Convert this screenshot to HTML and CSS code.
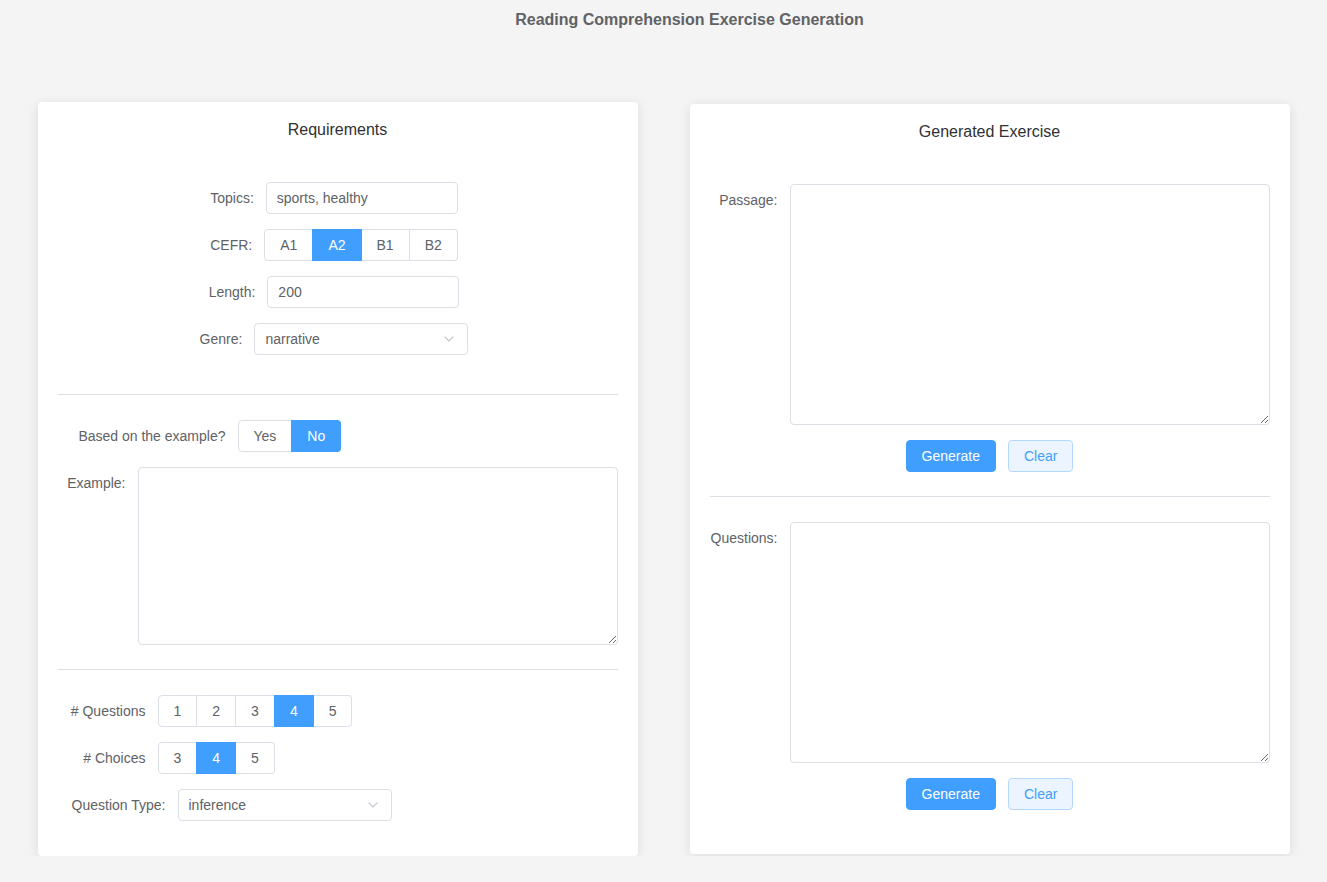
FILE: index.html
```html
<!DOCTYPE html>
<html lang="en">
<head>
<meta charset="utf-8">
<title>Reading Comprehension Exercise Generation</title>
<link rel="stylesheet" href="styles.css">
</head>
<body>
<h1 class="page-title">Reading Comprehension Exercise Generation</h1>
<main class="panels">
  <section class="card card-left">
    <h2 class="card-title">Requirements</h2>

    <div class="row-center">
      <div class="item">
        <label class="lbl">Topics:</label>
        <input class="input w192" type="text" value="sports, healthy">
      </div>
    </div>
    <div class="row-center">
      <div class="item">
        <label class="lbl">CEFR:</label>
        <div class="radio-group">
          <span class="rb">A1</span><span class="rb active">A2</span><span class="rb">B1</span><span class="rb">B2</span>
        </div>
      </div>
    </div>
    <div class="row-center">
      <div class="item">
        <label class="lbl">Length:</label>
        <input class="input w192" type="text" value="200">
      </div>
    </div>
    <div class="row-center">
      <div class="item">
        <label class="lbl">Genre:</label>
        <div class="select w214">
          <span class="select-text">narrative</span>
          <svg class="chev" width="10" height="6" viewBox="0 0 10 6"><path d="M0.6 0.6 L5 5 L9.4 0.6" fill="none" stroke="#c0c4cc" stroke-width="1.1"/></svg>
        </div>
      </div>
    </div>

    <hr class="divider">

    <div class="row">
      <label class="lbl fixed lw180">Based on the example?</label>
      <div class="radio-group">
        <span class="rb">Yes</span><span class="rb active">No</span>
      </div>
    </div>
    <div class="row top flush">
      <label class="lbl fixed lw80">Example:</label>
      <textarea class="textarea h178"></textarea>
    </div>

    <hr class="divider">

    <div class="row">
      <label class="lbl fixed lw100"># Questions</label>
      <div class="radio-group">
        <span class="rb">1</span><span class="rb">2</span><span class="rb">3</span><span class="rb active">4</span><span class="rb">5</span>
      </div>
    </div>
    <div class="row">
      <label class="lbl fixed lw100"># Choices</label>
      <div class="radio-group">
        <span class="rb">3</span><span class="rb active">4</span><span class="rb">5</span>
      </div>
    </div>
    <div class="row">
      <label class="lbl fixed lw120">Question Type:</label>
      <div class="select w214">
        <span class="select-text">inference</span>
        <svg class="chev" width="10" height="6" viewBox="0 0 10 6"><path d="M0.6 0.6 L5 5 L9.4 0.6" fill="none" stroke="#c0c4cc" stroke-width="1.1"/></svg>
      </div>
    </div>
  </section>

  <section class="card card-right">
    <h2 class="card-title">Generated Exercise</h2>

    <div class="row top">
      <label class="lbl fixed lw80">Passage:</label>
      <textarea class="textarea h241"></textarea>
    </div>
    <div class="btn-row">
      <button class="btn primary">Generate</button>
      <button class="btn plain">Clear</button>
    </div>

    <hr class="divider">

    <div class="row top">
      <label class="lbl fixed lw80">Questions:</label>
      <textarea class="textarea h241"></textarea>
    </div>
    <div class="btn-row end">
      <button class="btn primary">Generate</button>
      <button class="btn plain">Clear</button>
    </div>
  </section>
</main>
</body>
</html>
```

FILE: styles.css
```css
* { box-sizing: border-box; }

html, body {
  margin: 0;
  padding: 0;
  background: #f4f4f4;
  font-family: "Liberation Sans", Arial, Helvetica, sans-serif;
  font-size: 14px;
  color: #606266;
}

.page-title {
  margin: 0;
  padding-top: 10px;
  padding-left: 52px;
  height: 102px;
  font-size: 16px;
  line-height: 20px;
  font-weight: bold;
  color: #606266;
  text-align: center;
}

.panels {
  display: flex;
  justify-content: center;
  align-items: center;
  gap: 52px;
}

.card {
  width: 600px;
  background: #fff;
  border-radius: 4px;
  box-shadow: 0 2px 12px 0 rgba(0, 0, 0, 0.1);
  padding: 20px;
  display: flex;
  flex-direction: column;
}

.card-title {
  margin: 0 0 44px 0;
  font-size: 16px;
  line-height: 16px;
  font-weight: normal;
  color: #303133;
  text-align: center;
}

.row-center {
  display: flex;
  justify-content: center;
  margin-bottom: 15px;
}

.item {
  display: flex;
  align-items: center;
  margin-right: 7px;
}

.row {
  display: flex;
  align-items: center;
  margin-bottom: 15px;
}

.row.top { align-items: flex-start; }
.row.flush { margin-bottom: 0; }

.lbl {
  padding-right: 12px;
  line-height: 32px;
  color: #606266;
  white-space: nowrap;
  text-align: right;
}

.lbl.fixed { flex: none; }
.lw80 { width: 80px; }
.lw100 { width: 100px; }
.lw120 { width: 120px; }
.lw180 { width: 180px; }

.input {
  height: 32px;
  border: 1px solid #dcdfe6;
  border-radius: 4px;
  padding: 0 10px;
  font-family: inherit;
  font-size: 14px;
  color: #606266;
  outline: none;
  background: #fff;
}

.w192 { width: 192px; }
.w214 { width: 214px; }

.select {
  height: 32px;
  border: 1px solid #dcdfe6;
  border-radius: 4px;
  padding: 0 10px;
  display: flex;
  align-items: center;
  justify-content: space-between;
  background: #fff;
}

.select-text { color: #606266; }
.chev { margin-right: 3px; }

.radio-group {
  display: flex;
}

.rb {
  display: inline-block;
  height: 32px;
  line-height: 30px;
  padding: 0 15px;
  border: 1px solid #dcdfe6;
  border-left: 0;
  background: #fff;
  color: #606266;
  font-size: 14px;
  white-space: nowrap;
}

.rb:first-child {
  border-left: 1px solid #dcdfe6;
  border-radius: 4px 0 0 4px;
}

.rb:last-child { border-radius: 0 4px 4px 0; }

.rb.active {
  background: #409eff;
  border-color: #409eff;
  color: #fff;
  box-shadow: -1px 0 0 0 #409eff;
}

.divider {
  flex: none;
  border: 0;
  border-top: 1px solid #dcdfe6;
  margin: 24px 0 25px 0;
  height: 0;
  width: 100%;
}

.textarea {
  flex: 1;
  display: block;
  border: 1px solid #dcdfe6;
  border-radius: 4px;
  padding: 5px 15px;
  font-family: inherit;
  font-size: 14px;
  color: #606266;
  resize: vertical;
  outline: none;
  background: #fff;
}

.h178 { height: 178px; }
.h241 { height: 241px; }

.btn-row {
  display: flex;
  justify-content: center;
  gap: 12px;
}

.btn-row.end { margin-bottom: 24px; }

.btn {
  height: 32px;
  padding: 0 15px;
  border-radius: 4px;
  font-family: inherit;
  font-size: 14px;
  line-height: 30px;
  cursor: pointer;
}

.btn.primary {
  background: #409eff;
  border: 1px solid #409eff;
  color: #fff;
}

.btn.plain {
  background: #ecf5ff;
  border: 1px solid #b3d8ff;
  color: #409eff;
}
```
